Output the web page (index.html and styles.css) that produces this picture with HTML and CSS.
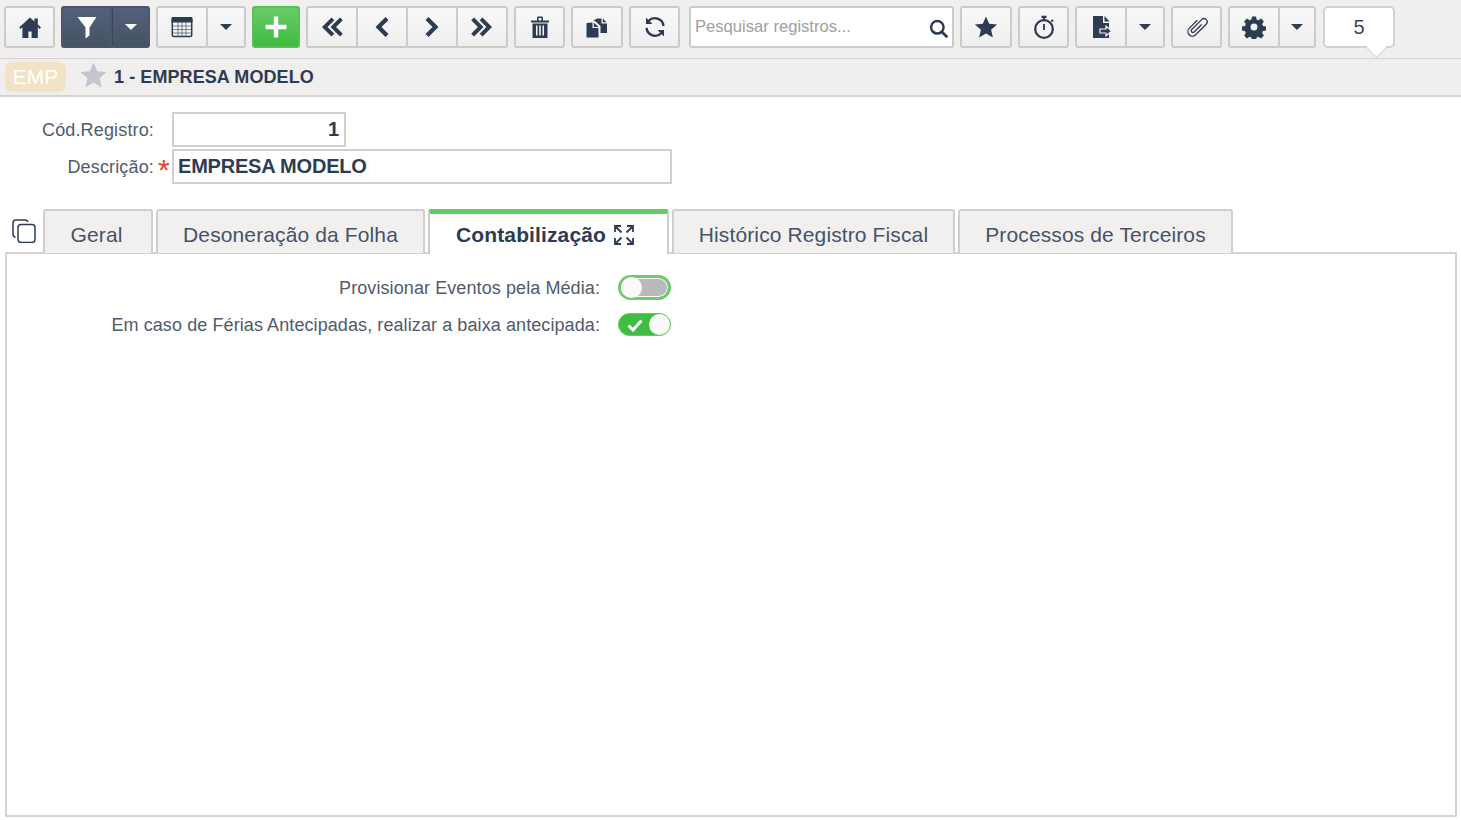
FILE: index.html
```html
<!DOCTYPE html>
<html lang="pt-BR">
<head>
<meta charset="utf-8">
<title>Empresa Modelo</title>
<link rel="stylesheet" href="styles.css">
</head>
<body>
<header class="toolbar">
  <button class="btn w51"><svg class="ico" viewBox="0 0 24 24"><path d="M12 2.500 1.200 12.600l1.300 1.400 1.900-1.700V23h6v-6.500h3.200V23h6.200V12.300l1.900 1.700 1.300-1.400-3.200-3V3.500h-3.400v2.900z"/></svg></button>
  <div class="group dark">
    <button class="btn w51"><svg class="ico" viewBox="0 0 24 24"><path d="M2.500 2h19L14.500 12.500v8l-4 3V12.500z" fill="#fff"/></svg></button>
    <button class="btn w38"><span class="caret"></span></button>
  </div>
  <div class="group">
    <button class="btn w52"><svg class="ico" viewBox="0 0 24 24"><path d="M3 2h18c1 0 1.500.6 1.500 1.500V7.500h-21V3.500C1.500 2.600 2 2 3 2z"/><rect class="line" x="2.300" y="3" width="19.400" height="18.500" rx="1.500" stroke-width="1.500"/><path class="line thin" d="M3 11h18M3 14.500h18M3 18h18M8 7v14M12 7v14M16 7v14" stroke-width=".8"/></svg></button>
    <button class="btn w38"><span class="caret"></span></button>
  </div>
  <button class="btn green"><svg class="ico" viewBox="0 0 24 24"><path d="M9.800 1.500h4.400v8.300h8.300v4.400h-8.300v8.300H9.800v-8.300H1.500V9.800h8.300z" fill="#fff"/></svg></button>
  <div class="group">
    <button class="btn w52"><svg class="ico" viewBox="0 0 24 24"><path d="M11.500 2.500l2.800 2.800L7.500 12l6.800 6.700-2.800 2.800L2 12zM20 2.500l2.800 2.800L16 12l6.800 6.700-2.800 2.800L10.500 12z"/></svg></button>
    <button class="btn w50"><svg class="ico" viewBox="0 0 24 24"><path d="M15.500 2l3 3-7 7 7 7-3 3-10-10z"/></svg></button>
    <button class="btn w50"><svg class="ico" viewBox="0 0 24 24"><path d="M8.500 2l-3 3 7 7-7 7 3 3 10-10z"/></svg></button>
    <button class="btn w50"><svg class="ico" viewBox="0 0 24 24"><path d="M4 2.500 1.200 5.300 7.900 12l-6.700 6.700L4 21.500 13.500 12zM12.500 2.500 9.700 5.300l6.700 6.700-6.700 6.700 2.800 2.800L22 12z"/></svg></button>
  </div>
  <button class="btn w51"><svg class="ico" viewBox="0 0 24 24"><path d="M3 5.500h18v2H3zM9 5.500V2.800C9 2 9.700 1.500 10.500 1.500h3c.8 0 1.500.5 1.500 1.300v2.700h-1.600V3.100h-2.800v2.400z"/><path d="M4.500 8.500h15V23h-15zM8 10.500v10h1.500v-10zM11.200 10.500v10h1.600v-10zM14.500 10.500v10H16v-10z" fill-rule="evenodd"/></svg></button>
  <button class="btn w52"><svg class="ico" viewBox="0 0 24 24"><path d="M8 6l4-2.500h4.500V8.500H22V18h-6.500v-7L10 6z"/><path d="M17.800 3.500l3.700 3.800h-3.700z"/><path d="M1.500 8l6-.5v5.500h6v9.500h-12z"/><path d="M8.800 7.500l4.700 4.500H8.800z"/></svg></button>
  <button class="btn w51"><svg class="ico" viewBox="0 0 24 24"><path class="line" stroke-width="2.400" d="M20.500 11A8.700 8.700 0 0 0 5.500 6M3.500 13A8.700 8.700 0 0 0 18.500 18"/><path d="M3 2.500v6.500h6.500zM21 21.500V15h-6.500z"/></svg></button>
  <div class="search">
    <input class="search-input" type="text" placeholder="Pesquisar registros...">
    <svg class="search-ico" viewBox="0 0 24 24"><circle class="line" cx="10" cy="10" r="7.500" stroke-width="3"/><path class="line" d="M15.500 15.500 22 22" stroke-width="3.400"/></svg>
  </div>
  <button class="btn w52"><svg class="ico" viewBox="0 0 24 24"><path d="M12 1.500l3.200 7.300 7.900.7-6 5.200 1.800 7.800L12 18.400l-6.900 4.100 1.800-7.800-6-5.200 7.900-.7z"/></svg></button>
  <button class="btn w51"><svg class="ico" viewBox="0 0 24 24"><circle class="line" cx="12" cy="14" r="8.800" stroke-width="2.300"/><path class="line" d="M12 9v6" stroke-width="1.800"/><path class="line" d="M9.500 1.800h5M12 2v3M19.500 5l1.500 1.500" stroke-width="2.200"/></svg></button>
  <div class="group">
    <button class="btn w52"><svg class="ico" viewBox="0 0 24 24"><path d="M4 1h10v7h6v15H4z"/><path d="M15.500 1l5 5.500h-5z"/><path class="arrow" d="M11 14h6v-3l5.500 5-5.500 5v-3h-6z" stroke-width="1.200"/></svg></button>
    <button class="btn w38"><span class="caret"></span></button>
  </div>
  <button class="btn w51"><svg class="ico" viewBox="0 0 24 24"><path class="line" stroke-width="1.300" transform="rotate(45 12 12)" d="M7.500 7v11.500a4.500 4.500 0 0 0 9 0V3.500a3.200 3.200 0 0 0-6.400 0v14a1.700 1.700 0 0 0 3.400 0V7"/></svg></button>
  <div class="group">
    <button class="btn w52"><svg class="ico" viewBox="0 0 24 24"><path fill-rule="evenodd" d="M10 1.500h4l.6 3 1.900.8 2.600-1.700 2.800 2.800-1.700 2.600.8 1.900 3 .6v4l-3 .6-.8 1.900 1.700 2.600-2.800 2.800-2.600-1.700-1.900.8-.6 3h-4l-.6-3-1.900-.8-2.600 1.700-2.800-2.800 1.700-2.600-.8-1.900-3-.6v-4l3-.6.8-1.900-1.700-2.600 2.800-2.800 2.600 1.700 1.900-.8zM12 8.500a3.500 3.500 0 1 0 0 7 3.500 3.500 0 0 0 0-7z"/></svg></button>
    <button class="btn w36"><span class="caret"></span></button>
  </div>
  <div class="counter">5</div>
</header>

<div class="crumb">
  <span class="badge">EMP</span>
  <svg class="crumb-star" viewBox="0 0 24 24"><path d="M12 .5l3.500 8 8.500.8-6.400 5.700 1.900 8.500L12 19l-7.500 4.500 1.900-8.500L0 9.300l8.500-.8z"/></svg>
  <span class="crumb-title">1 - EMPRESA MODELO</span>
</div>

<main class="content">
  <section class="form">
    <label class="form-label">Cód.Registro:</label>
    <span></span>
    <input class="field field-code" type="text" value="1">
    <label class="form-label">Descrição:</label>
    <span class="req">*</span>
    <input class="field field-desc" type="text" value="EMPRESA MODELO">
  </section>

  <nav class="tabs">
    <svg class="tabs-copy" viewBox="0 0 24 24" fill="none" stroke="#2d3c52" stroke-width="1.500"><rect x="6" y="5.500" width="17" height="18" rx="3"/><path d="M3.500 18.500C2 18 1 17 1 15V4c0-2 1.500-3 3-3h9c1.500 0 2.500.8 3 2"/></svg>
    <a class="tab t1">Geral</a>
    <a class="tab t2">Desoneração da Folha</a>
    <a class="tab active t3">Contabilização
      <svg class="expand" viewBox="0 0 20 20" fill="none" stroke="#2d3c52" stroke-width="1.800"><path d="M1 7V1h6M13 1h6v6M19 13v6h-6M7 19H1v-6M2 2l5.500 5.500M18 2l-5.500 5.500M18 18l-5.500-5.500M2 18l5.500-5.500"/></svg>
    </a>
    <a class="tab t4">Histórico Registro Fiscal</a>
    <a class="tab t5">Processos de Terceiros</a>
  </nav>

  <section class="panel">
    <div class="opt">
      <span class="opt-label">Provisionar Eventos pela Média:</span>
      <span class="switch off"><span class="knob"></span></span>
    </div>
    <div class="opt">
      <span class="opt-label">Em caso de Férias Antecipadas, realizar a baixa antecipada:</span>
      <span class="switch on">
        <svg class="check" viewBox="0 0 16 14"><path d="M1.500 7.500 6 12 14.500 2.500" fill="none" stroke="#fff" stroke-width="3"/></svg>
        <span class="knob"></span>
      </span>
    </div>
  </section>
</main>
</body>
</html>
```
FILE: styles.css
```css
* { box-sizing: border-box; }
html, body { margin: 0; padding: 0; height: 820px; overflow: hidden; background: #fff; }
body { font-family: "Liberation Sans", Arial, sans-serif; color: #2d3c52; }

.toolbar {
  height: 59px; padding: 6px 0 0 4px; display: flex; align-items: flex-start; gap: 6px;
  background: #f0efee; border-bottom: 1px solid #d4d3d2;
}
.btn {
  height: 42px; padding: 0; display: flex; align-items: center; justify-content: center; flex: none;
  border: 2px solid #cbcbcb; border-radius: 3px;
  background: linear-gradient(#f8f8f8, #efefef);
}
.w36 { width: 36px; } .w38 { width: 38px; } .w50 { width: 50px; } .w51 { width: 51px; } .w52 { width: 52px; }
.ico { width: 24px; height: 24px; fill: #2d3c52; display: block; }
.line { fill: none; stroke: #2d3c52; }
.thin { stroke-opacity: .75; }
.arrow { fill: #2d3c52; stroke: #f5f5f5; }

.group { display: flex; flex: none; }
.group .btn { border-radius: 0; border-left-width: 0; }
.group .btn:first-child { border-left-width: 2px; border-radius: 3px 0 0 3px; }
.group .btn:last-child { border-radius: 0 3px 3px 0; }
.caret { width: 0; height: 0; border: 6px solid transparent; border-top-color: #2d3c52; border-bottom-width: 0; }

.dark .btn { background: linear-gradient(#53607a, #465364); border-color: #4a5669; }
.dark .btn:last-child { border-left: 1px solid #3b4656; }
.dark .caret { border-top-color: #fff; }

.green { width: 48px; background: linear-gradient(#6bcb69, #3cbc3f); border-color: #55c155; }

.search { position: relative; width: 265px; margin-left: 3px; flex: none; }
.search-input {
  width: 100%; height: 42px; padding: 0 30px 0 4px; display: block; outline: none;
  border: 2px solid #cbcbcb; border-radius: 3px; background: #fff;
  font: 16.600px "Liberation Sans", Arial, sans-serif; color: #2d3c52;
}
.search-input::placeholder { color: #a0a0a0; opacity: 1; }
.search-ico { position: absolute; right: 5px; top: 13px; width: 20px; height: 20px; }

.counter {
  position: relative; width: 72px; height: 42px; margin-left: 1px; flex: none;
  display: flex; align-items: center; justify-content: center;
  background: #fff; border: 2px solid #d2d2d2; border-radius: 5px;
  font-size: 20px; color: #3a4759;
}
.counter::after {
  content: ""; position: absolute; left: 44px; bottom: -8.500px; width: 14px; height: 14px;
  background: #fff; border-right: 1px solid #d2d2d2; border-bottom: 1px solid #d2d2d2;
  transform: rotate(45deg);
}

.crumb {
  height: 38px; padding: 0 0 0 5px; display: flex; align-items: center;
  background: #f0efee; border-bottom: 2px solid #d4d3d2;
}
.badge {
  width: 61px; height: 30px; display: flex; align-items: center; justify-content: center;
  background: #f3e3c6; border-radius: 7px; color: #fff; font-size: 21px;
}
.crumb-star { width: 27px; height: 26px; margin: -4px 0 0 14px; fill: #c3c6cf; }
.crumb-title { margin: 1px 0 0 7px; font-size: 18px; font-weight: 700; letter-spacing: .08px; }

.content { padding: 0 4px 0 5px; }

.form {
  padding-top: 15px; display: grid; grid-template-columns: 149px 18px 500px; row-gap: 2px;
  align-items: center; height: 112px; align-content: start;
}
.form-label { padding-top: 2px; text-align: right; font-size: 18px; letter-spacing: .15px; color: #4f5b6c; }
.req { color: #e2432d; font-size: 30px; line-height: 22px; height: 16px; padding-left: 4px; }
.field {
  height: 35px; padding: 0 4px; outline: none; display: block;
  border: 2px solid #d0d0d0; background: #fff;
  font: 700 20px "Liberation Sans", Arial, sans-serif; letter-spacing: -.2px; color: #2d3c52;
}
.field-code { width: 174px; text-align: right; padding-right: 5px; }
.field-desc { width: 500px; }

.tabs { height: 44px; position: relative; display: flex; align-items: stretch; gap: 3px; padding-left: 38px; }
.tabs-copy { position: absolute; left: 7px; top: 10px; width: 24px; height: 24px; }
.tab {
  height: 44px; display: flex; align-items: center; justify-content: center; padding-top: 6px;
  background: #f1f0ef; border: 2px solid #cfcecd; border-bottom: 0; border-radius: 3px 3px 0 0;
  font-size: 21px; letter-spacing: .12px; color: #45536a;
}
.t1 { width: 110px; padding-right: 3px; } .t2 { width: 269px; } .t3 { width: 241px; } .t4 { width: 283px; } .t5 { width: 275px; }
.tab.active {
  position: relative; z-index: 1; height: 45px; gap: 8px; background: #fff; border-top: 5px solid #62cb66;
  padding: 1px 7px 0 0; font-weight: 700; color: #2d3c52;
}
.expand { width: 20px; height: 20px; flex: none; }

.panel { width: 1452px; height: 565px; margin-top: -1px; padding-top: 17px; border: 2px solid #d4d3d2; border-radius: 1px; background: #fff; }
.opt { height: 37px; display: flex; align-items: flex-start; padding-top: 4px; }
.opt-label { width: 593px; text-align: right; font-size: 18px; letter-spacing: .09px; line-height: 26px; color: #4f5b6c; }
.switch {
  position: relative; width: 53px; height: 25px; margin-left: 18px; flex: none; display: block; border-radius: 13px;
}
.switch.off { background: #b9b9b9; border: 3px solid #6bcb6e; box-shadow: inset 0 0 0 1px #fff; }
.switch.on { height: 23px; margin-top: 1px; background: #3fbd42; border: 1px solid #62cb66; }
.knob { position: absolute; width: 21px; height: 21px; border-radius: 50%; background: #fafafa; }
.off .knob { left: 0; top: -1px; }
.on .knob { right: 0; top: 0; }
.check { position: absolute; left: 8px; top: 4px; width: 16px; height: 14px; }
```
